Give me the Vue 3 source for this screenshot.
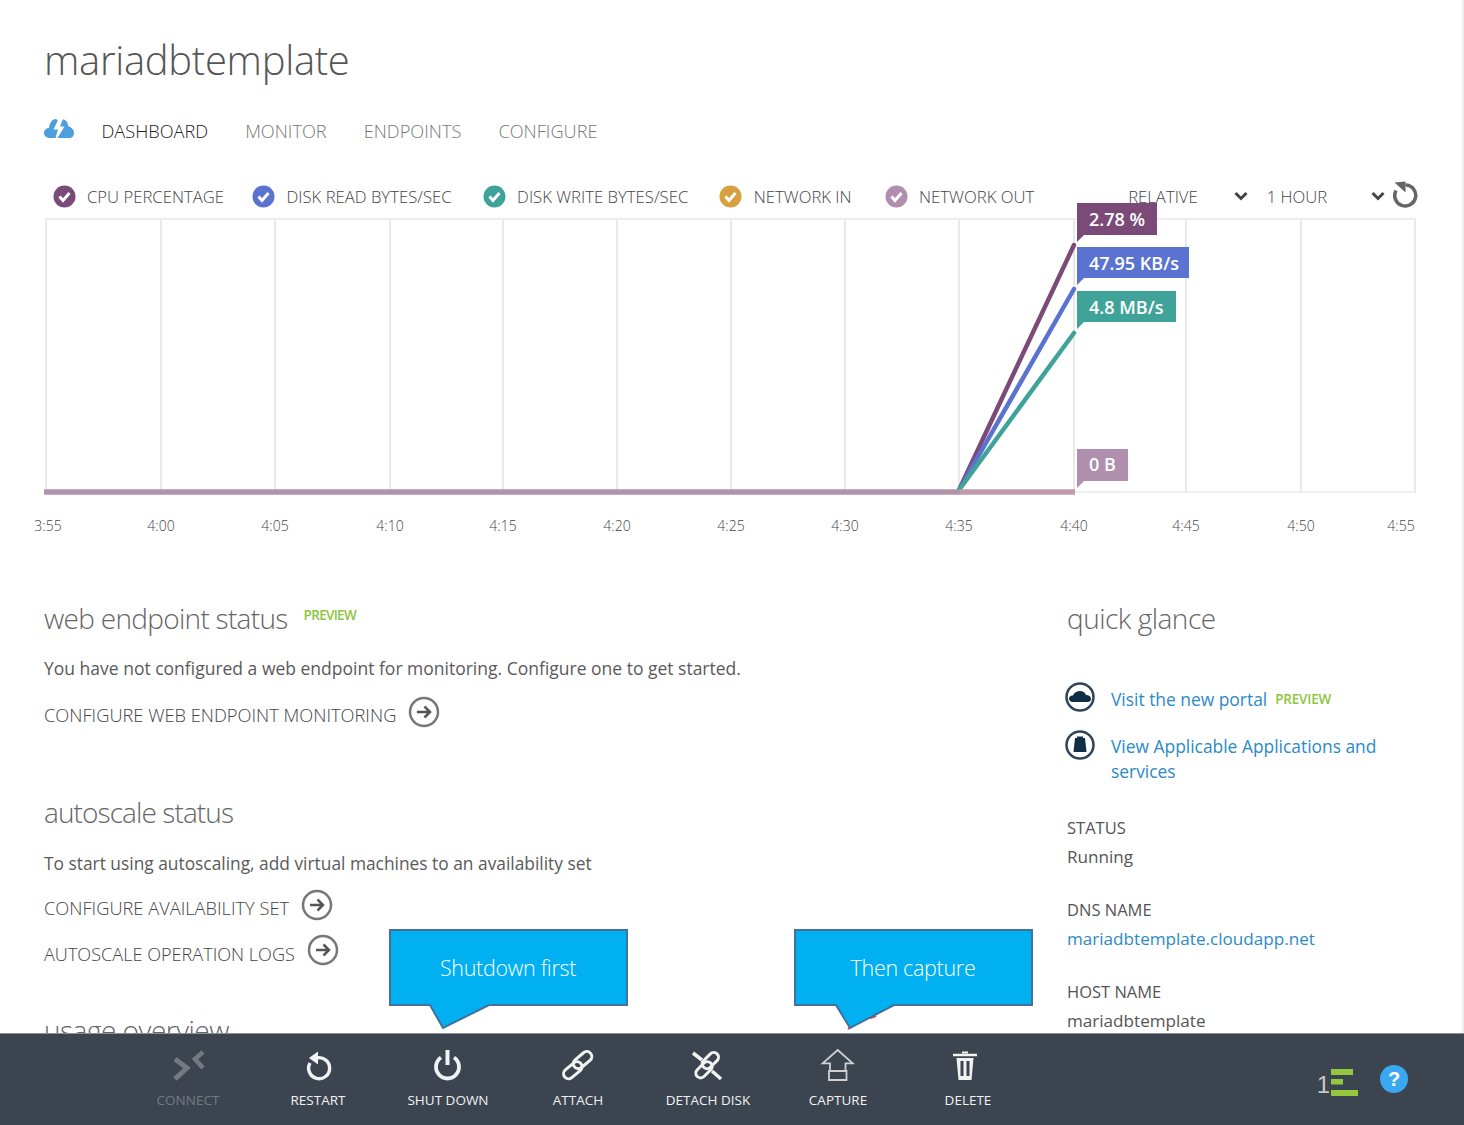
<script setup>
const tabs = [
  { label: 'DASHBOARD', active: true },
  { label: 'MONITOR' },
  { label: 'ENDPOINTS' },
  { label: 'CONFIGURE' },
]
const legend = [
  { label: 'CPU PERCENTAGE', color: '#7b4a78' },
  { label: 'DISK READ BYTES/SEC', color: '#5a73d0' },
  { label: 'DISK WRITE BYTES/SEC', color: '#3fa39a' },
  { label: 'NETWORK IN', color: '#d9a03f' },
  { label: 'NETWORK OUT', color: '#b08fae' },
]
const gridX = [46, 161, 275, 390, 503, 617, 731, 845, 959, 1074, 1186, 1301, 1415]
const ticks = [
  { x: 48, t: '3:55' }, { x: 161, t: '4:00' }, { x: 275, t: '4:05' }, { x: 390, t: '4:10' },
  { x: 503, t: '4:15' }, { x: 617, t: '4:20' }, { x: 731, t: '4:25' }, { x: 845, t: '4:30' },
  { x: 959, t: '4:35' }, { x: 1074, t: '4:40' }, { x: 1186, t: '4:45' }, { x: 1301, t: '4:50' }, { x: 1401, t: '4:55' },
]
const tags = [
  { y: 203, w: 80, h: 32, t: '2.78 %', c: '#7b4a78', dy: 6.500 },
  { y: 247, w: 112, h: 31, t: '47.95 KB/s', c: '#5a73d0', dy: 7.500 },
  { y: 291, w: 99, h: 31, t: '4.8 MB/s', c: '#3fa39a', dy: 7.500 },
  { y: 449, w: 51, h: 32, t: '0 B', c: '#b08fae', dy: 6 },
]
const actions = [
  { label: 'CONNECT', icon: 'connect', off: true },
  { label: 'RESTART', icon: 'restart' },
  { label: 'SHUT DOWN', icon: 'power' },
  { label: 'ATTACH', icon: 'attach' },
  { label: 'DETACH DISK', icon: 'detach' },
  { label: 'CAPTURE', icon: 'capture' },
  { label: 'DELETE', icon: 'delete' },
]
</script>

<template>
  <div class="page">
    <main class="main">
      <h1 class="title">mariadbtemplate</h1>

      <nav class="tabs">
        <svg class="tab-icon" width="30" height="20" viewBox="0 0 30 20">
          <path d="M6 20C2 20 0 17.500 0 15C0 12 2.500 10 5 10C5.500 5 8 1 12 1L15 3C17 1 19 1 21 2C23.500 3.500 24 6 24 8C27 9 30 11.500 30 15C30 18 28 20 25 20Z" fill="#4a9fdc"/>
          <path d="M14.500 1L9.500 11.500H14L11.500 20H13.500L20.500 8.500H16L19 1Z" fill="#fff"/>
        </svg>
        <span v-for="t in tabs" :key="t.label" class="tab" :class="{ active: t.active }">{{ t.label }}</span>
      </nav>

      <div class="legend">
        <div v-for="l in legend" :key="l.label" class="legend-item">
          <svg width="23" height="23" viewBox="0 0 23 23">
            <circle cx="11.500" cy="11.500" r="11" :fill="l.color"/>
            <path d="M6.500 11.500L10 15.500L16.500 8" fill="none" stroke="#fff" stroke-width="3"/>
          </svg>
          <span>{{ l.label }}</span>
        </div>
        <div class="range">
          <span class="range-label first">RELATIVE</span>
          <svg class="chev" width="14" height="10" viewBox="0 0 14 10"><path d="M1.500 2L7 7.500L12.500 2" fill="none" stroke="#444" stroke-width="3"/></svg>
          <span class="range-label second">1 HOUR</span>
          <svg class="chev second-chev" width="14" height="10" viewBox="0 0 14 10"><path d="M1.500 2L7 7.500L12.500 2" fill="none" stroke="#444" stroke-width="3"/></svg>
          <svg class="refresh" width="26" height="28" viewBox="0 0 26 28">
            <path d="M12.500 4A10.500 10.500 0 1 1 3 9.500" fill="none" stroke="#666" stroke-width="3.500"/>
            <path d="M1.500 1.500L12.500 0.500V11.500Z" fill="#666"/>
          </svg>
        </div>
      </div>

      <svg class="chart" width="1464" height="333" viewBox="0 212 1464 333">
        <rect x="46" y="219" width="1369" height="273" fill="none" stroke="#eeeeee" stroke-width="2"/>
        <line v-for="x in gridX" :key="x" :x1="x" :x2="x" y1="219" y2="492" stroke="#e9e9e9" stroke-width="2"/>
        <line x1="959" y1="490" x2="1074" y2="245" stroke="#7b4a78" stroke-width="4.500" stroke-linecap="round"/>
        <line x1="959" y1="490" x2="1074" y2="289" stroke="#5a73d0" stroke-width="4.500" stroke-linecap="round"/>
        <line x1="959" y1="490" x2="1074" y2="333" stroke="#3fa39a" stroke-width="4.500" stroke-linecap="round"/>
        <line x1="44" y1="492" x2="960" y2="492" stroke="#b094ab" stroke-width="5.500"/>
        <line x1="960" y1="492" x2="1075" y2="492" stroke="#c09aaa" stroke-width="5.500"/>
        <g v-for="tag in tags" :key="tag.t">
          <rect x="1077" :y="tag.y" :width="tag.w" :height="tag.h" :fill="tag.c"/>
          <path :d="`M1077 ${tag.y + tag.h}v7l7-7z`" :fill="tag.c"/>
          <text x="1089" :y="tag.y + tag.h / 2 + tag.dy" class="tag-text">{{ tag.t }}</text>
        </g>
        <text v-for="k in ticks" :key="k.t" :x="k.x" y="531" text-anchor="middle" class="tick">{{ k.t }}</text>
      </svg>

      <div class="columns">
        <section class="left">
          <div class="heading-row">
            <h2 class="h-web">web endpoint status</h2>
            <span class="preview raised">PREVIEW</span>
          </div>
          <p class="para">You have not configured a web endpoint for monitoring. Configure one to get started.</p>
          <div class="action a1">
            <span>CONFIGURE WEB ENDPOINT MONITORING</span>
            <svg class="go" width="32" height="32" viewBox="0 0 32 32"><circle cx="16" cy="16" r="14" fill="none" stroke="#777" stroke-width="2.500"/><path d="M9 16H22M16.500 10.500L22 16L16.500 21.500" fill="none" stroke="#555" stroke-width="2.500"/></svg>
          </div>

          <h2 class="autoscale">autoscale status</h2>
          <p class="para p2">To start using autoscaling, add virtual machines to an availability set</p>
          <div class="action a2">
            <span>CONFIGURE AVAILABILITY SET</span>
            <svg class="go" width="32" height="32" viewBox="0 0 32 32"><circle cx="16" cy="16" r="14" fill="none" stroke="#777" stroke-width="2.500"/><path d="M9 16H22M16.500 10.500L22 16L16.500 21.500" fill="none" stroke="#555" stroke-width="2.500"/></svg>
          </div>
          <div class="action a3">
            <span>AUTOSCALE OPERATION LOGS</span>
            <svg class="go" width="32" height="32" viewBox="0 0 32 32"><circle cx="16" cy="16" r="14" fill="none" stroke="#777" stroke-width="2.500"/><path d="M9 16H22M16.500 10.500L22 16L16.500 21.500" fill="none" stroke="#555" stroke-width="2.500"/></svg>
          </div>
          <h2 class="usage">usage overview</h2>
        </section>

        <aside class="right">
          <h2 class="h-quick">quick glance</h2>
          <div class="quick q1">
            <svg width="30" height="30" viewBox="0 0 30 30">
              <circle cx="15" cy="15" r="13.500" fill="#fff" stroke="#2f4457" stroke-width="2.500"/>
              <path d="M8 20C5 20 4 18 4 16.500C4 14.500 6 13 8 13.500C9 10.500 12 9 15 9C18 9 20.500 11 21 13C24 13 26 14.500 26 17C26 19 24.500 20 22.500 20Z" fill="#0f2d45"/>
            </svg>
            <a>Visit the new portal</a><span class="preview inline">PREVIEW</span>
          </div>
          <div class="quick q2">
            <svg width="30" height="30" viewBox="0 0 30 30">
              <circle cx="15" cy="15" r="13.500" fill="#fff" stroke="#2f4457" stroke-width="2.500"/>
              <path d="M12 8V6.500H18V8H20L21.500 22H8.500L10 8Z" fill="#0f2d45"/>
            </svg>
            <a>View Applicable Applications and services</a>
          </div>
          <dl class="facts">
            <dt>STATUS</dt><dd>Running</dd>
            <dt>DNS NAME</dt><dd><a>mariadbtemplate.cloudapp.net</a></dd>
            <dt>HOST NAME</dt><dd>mariadbtemplate</dd>
          </dl>
        </aside>
      </div>
    </main>

    <footer class="bar">
      <button v-for="a in actions" :key="a.label" class="cmd" :class="{ off: a.off }">
        <svg width="40" height="40" viewBox="0 0 40 40" fill="none" stroke="currentColor">
          <template v-if="a.icon === 'connect'">
            <path d="M7 13L19 22L7 33" stroke-width="5"/>
            <path d="M35 6L27 13L35 22" stroke-width="4.500"/>
          </template>
          <template v-else-if="a.icon === 'restart'">
            <path d="M17.500 11A10.500 10.500 0 1 1 11 16" stroke-width="3.400" transform="translate(1 1)"/>
            <path d="M20 5.500V18.500L11 12Z" fill="currentColor" stroke="none"/>
          </template>
          <template v-else-if="a.icon === 'power'">
            <path d="M13 11.500A11.500 11.500 0 1 0 26 11.500" stroke-width="3.800"/>
            <path d="M19.500 4V19" stroke-width="4"/>
          </template>
          <g v-else-if="a.icon === 'attach'" transform="rotate(-40 19.500 19)">
            <rect x="16" y="13.500" width="21" height="10" rx="5" stroke-width="3"/>
            <rect x="2" y="15" width="21" height="10" rx="5" stroke-width="3"/>
          </g>
          <template v-else-if="a.icon === 'detach'">
            <g transform="rotate(-45 19 19)">
              <rect x="15" y="13.500" width="19" height="9.500" rx="4.750" stroke-width="3"/>
              <rect x="4" y="15.500" width="19" height="9.500" rx="4.750" stroke-width="3"/>
            </g>
            <path d="M5 7L14 14M24 25L33 33" stroke="#3c4450" stroke-width="6"/>
            <path d="M5 7L14 14M24 25L33 33" stroke-width="3.500"/>
          </template>
          <g v-else-if="a.icon === 'capture'" stroke="#cfd0d2">
            <path d="M19.700 4L34.700 17.300H27.500V25H12V17.300H4.700Z" stroke-width="1.800"/>
            <path d="M11 25H28.500V34H11Z" stroke-width="1.800"/>
          </g>
          <template v-else>
            <path d="M5 9H29" stroke-width="2.500"/>
            <path d="M14 6.500H20" stroke-width="2"/>
            <path d="M8.500 12L10.500 34H23.500L25.500 12Z" fill="currentColor" stroke="none"/>
            <path d="M14 15V30M20 15V30" stroke="#3c4450" stroke-width="3"/>
          </template>
        </svg>
        <span>{{ a.label }}</span>
      </button>
      <div class="status">
        <span class="count">1</span>
        <svg class="bars" width="27" height="27" viewBox="0 0 27 27">
          <rect x="0" y="0" width="22" height="6" fill="#93c83e"/>
          <rect x="0" y="10" width="12" height="5.500" fill="#93c83e"/>
          <rect x="0" y="21" width="27" height="6" fill="#93c83e"/>
        </svg>
        <span class="help">?</span>
      </div>
    </footer>

    <div class="callout first">
      <svg width="243" height="104" viewBox="0 0 243 104">
        <path d="M1 1H238V76H100L54 99L41 76H1Z" fill="#00b0f0" stroke="#41719c" stroke-width="2"/>
      </svg>
      <span>Shutdown first</span>
    </div>
    <div class="callout second">
      <svg width="243" height="104" viewBox="0 0 243 104">
        <path d="M82 87L76 89M57 98L54 100" stroke="#f03030" stroke-width="2"/>
        <path d="M1 1H238V76H100L56 99L42 76H1Z" fill="#00b0f0" stroke="#41719c" stroke-width="2"/>
      </svg>
      <span>Then capture</span>
    </div>
  </div>
</template>

<style>
html, body { margin: 0; background: #fff; }
</style>

<style scoped>
.page {
  position: relative;
  width: 1464px;
  height: 1125px;
  overflow: hidden;
  display: flex;
  flex-direction: column;
  font-family: "Open Sans", "Noto Sans", sans-serif;
  color: #444;
  background: #fff;
}
.main { height: 1033px; overflow: hidden; flex: none; box-sizing: border-box; border-right: 2px solid #eeeeee; }
.title {
  margin: 0;
  padding: 30px 0 0 44px;
  height: 60px;
  font-size: 40px;
  line-height: 60px;
  font-weight: 300;
  letter-spacing: -0.3px;
  color: #555;
}
.tabs {
  margin-top: 26px;
  padding-left: 44px;
  height: 30px;
  display: flex;
  align-items: center;
  gap: 37px;
  font-size: 18.200px;
  line-height: 28px;
  font-weight: 300;
  color: #777;
}
.tab-icon { margin-right: -9.500px; margin-top: -6px; }
.tab.active { color: #222; }
.legend {
  margin-top: 34px;
  height: 32px;
  padding-left: 52.500px;
  display: flex;
  align-items: center;
  gap: 31px;
  font-size: 16.700px;
  font-weight: 300;
  color: #444;
}
.legend-item { display: flex; align-items: center; gap: 11.500px; }
.legend-item:first-child { margin-right: -3px; }
.legend-item:nth-child(4) { margin-right: 2px; }
.range { display: flex; align-items: center; margin-left: 63px; }
.chev { margin-left: 36px; }
.range-label.second { margin-left: 19px; }
.second-chev { margin-left: 44px; }
.refresh { margin-left: 8px; margin-top: -2px; }
.chart { display: block; overflow: visible; }
.tag-text { font-size: 18px; font-weight: 600; fill: #fff; font-family: "Open Sans", sans-serif; }
.tick { font-size: 14px; font-weight: 300; fill: #444; font-family: "Open Sans", sans-serif; }
.columns {
  margin-top: 54px;
  padding-left: 44px;
  display: grid;
  grid-template-columns: 1023px 360px;
}
h2 {
  margin: 0;
  font-size: 28px;
  line-height: 38px;
  font-weight: 300;
  letter-spacing: -0.7px;
  color: #666;
}
.h-quick { letter-spacing: -0.5px; }
.autoscale { letter-spacing: -0.9px; }
.usage { letter-spacing: -0.5px; }
.heading-row { display: flex; align-items: flex-start; gap: 16px; }
.preview { font-size: 13.500px; font-weight: 600; color: #8cc63f; }
.raised { line-height: 32px; letter-spacing: -0.7px; }
.para { margin: 18px 0 0; font-size: 17.500px; line-height: 26px; font-weight: 400; color: #5a5a5a; }
.action {
  display: flex;
  align-items: center;
  gap: 12px;
  font-size: 18.250px;
  font-weight: 300;
  color: #444;
  height: 32px;
}
.go { flex: none; margin-top: -4px; }
.a1 { margin-top: 17px; }
.autoscale { margin-top: 63px; }
.p2 { margin-top: 19px; font-size: 17.350px; }
.a2 { margin-top: 15px; }
.a3 { margin-top: 15px; font-size: 18.100px; }
.a3 .go { margin-top: -8px; }
.usage { margin-top: 41px; }
.quick { display: flex; align-items: flex-start; color: #2b8ac6; font-size: 17.400px; font-weight: 400; line-height: 25px; }
.quick a, .facts a { color: #2b8ac6; }
.quick svg { flex: none; margin-right: 16px; }
.q1 { margin-top: 45px; margin-left: -2px; }
.q2 { margin-top: 18px; margin-left: -2px; width: 340px; }
.q1 a { margin-top: 5px; }
.q2 a { margin-top: 4px; }
.inline { margin-left: 8px; margin-top: 5px; letter-spacing: -0.2px; }
.facts { margin: 29px 0 0; font-size: 17.100px; line-height: 29px; }
.facts dt { font-weight: 400; font-size: 16.500px; color: #555; }
.facts dd { margin: 0 0 24px; font-weight: 400; color: #555; }
.bar {
  flex: 1;
  display: flex;
  align-items: flex-start;
  padding-left: 123px;
  background: #3c4450;
  border-top: 1px solid #8c9096;
  position: relative;
}
.cmd {
  all: unset;
  width: 130px;
  height: 91px;
  display: flex;
  flex-direction: column;
  align-items: center;
  color: #f2f2f2;
  font-family: "Open Sans", sans-serif;
  font-size: 13.500px;
  padding-top: 12px;
  box-sizing: border-box;
}
.cmd span { margin-top: 5px; }
.cmd.off { color: #757a81; }
.status { position: absolute; right: 56px; top: 31px; display: flex; align-items: flex-start; }
.count { color: #c8c8c8; font: 24px/28px "Liberation Sans", sans-serif; margin-top: 6px; margin-right: 1px; }
.bars { margin-top: 4px; }
.help {
  width: 28px;
  height: 28px;
  border-radius: 50%;
  background: #3aa8f0;
  color: #fff;
  font: bold 20px/28px "Liberation Sans", sans-serif;
  text-align: center;
  margin-left: 22px;
}
.callout { position: absolute; top: 929px; width: 243px; height: 104px; }
.callout.first { left: 388.500px; }
.callout.second { left: 793.500px; }
.callout svg { display: block; }
.callout span {
  position: absolute;
  left: 0;
  top: 0;
  width: 239px;
  height: 76px;
  display: flex;
  align-items: center;
  justify-content: center;
  font-size: 21.500px;
  font-weight: 300;
  letter-spacing: -0.3px;
  color: #fff;
}
</style>
